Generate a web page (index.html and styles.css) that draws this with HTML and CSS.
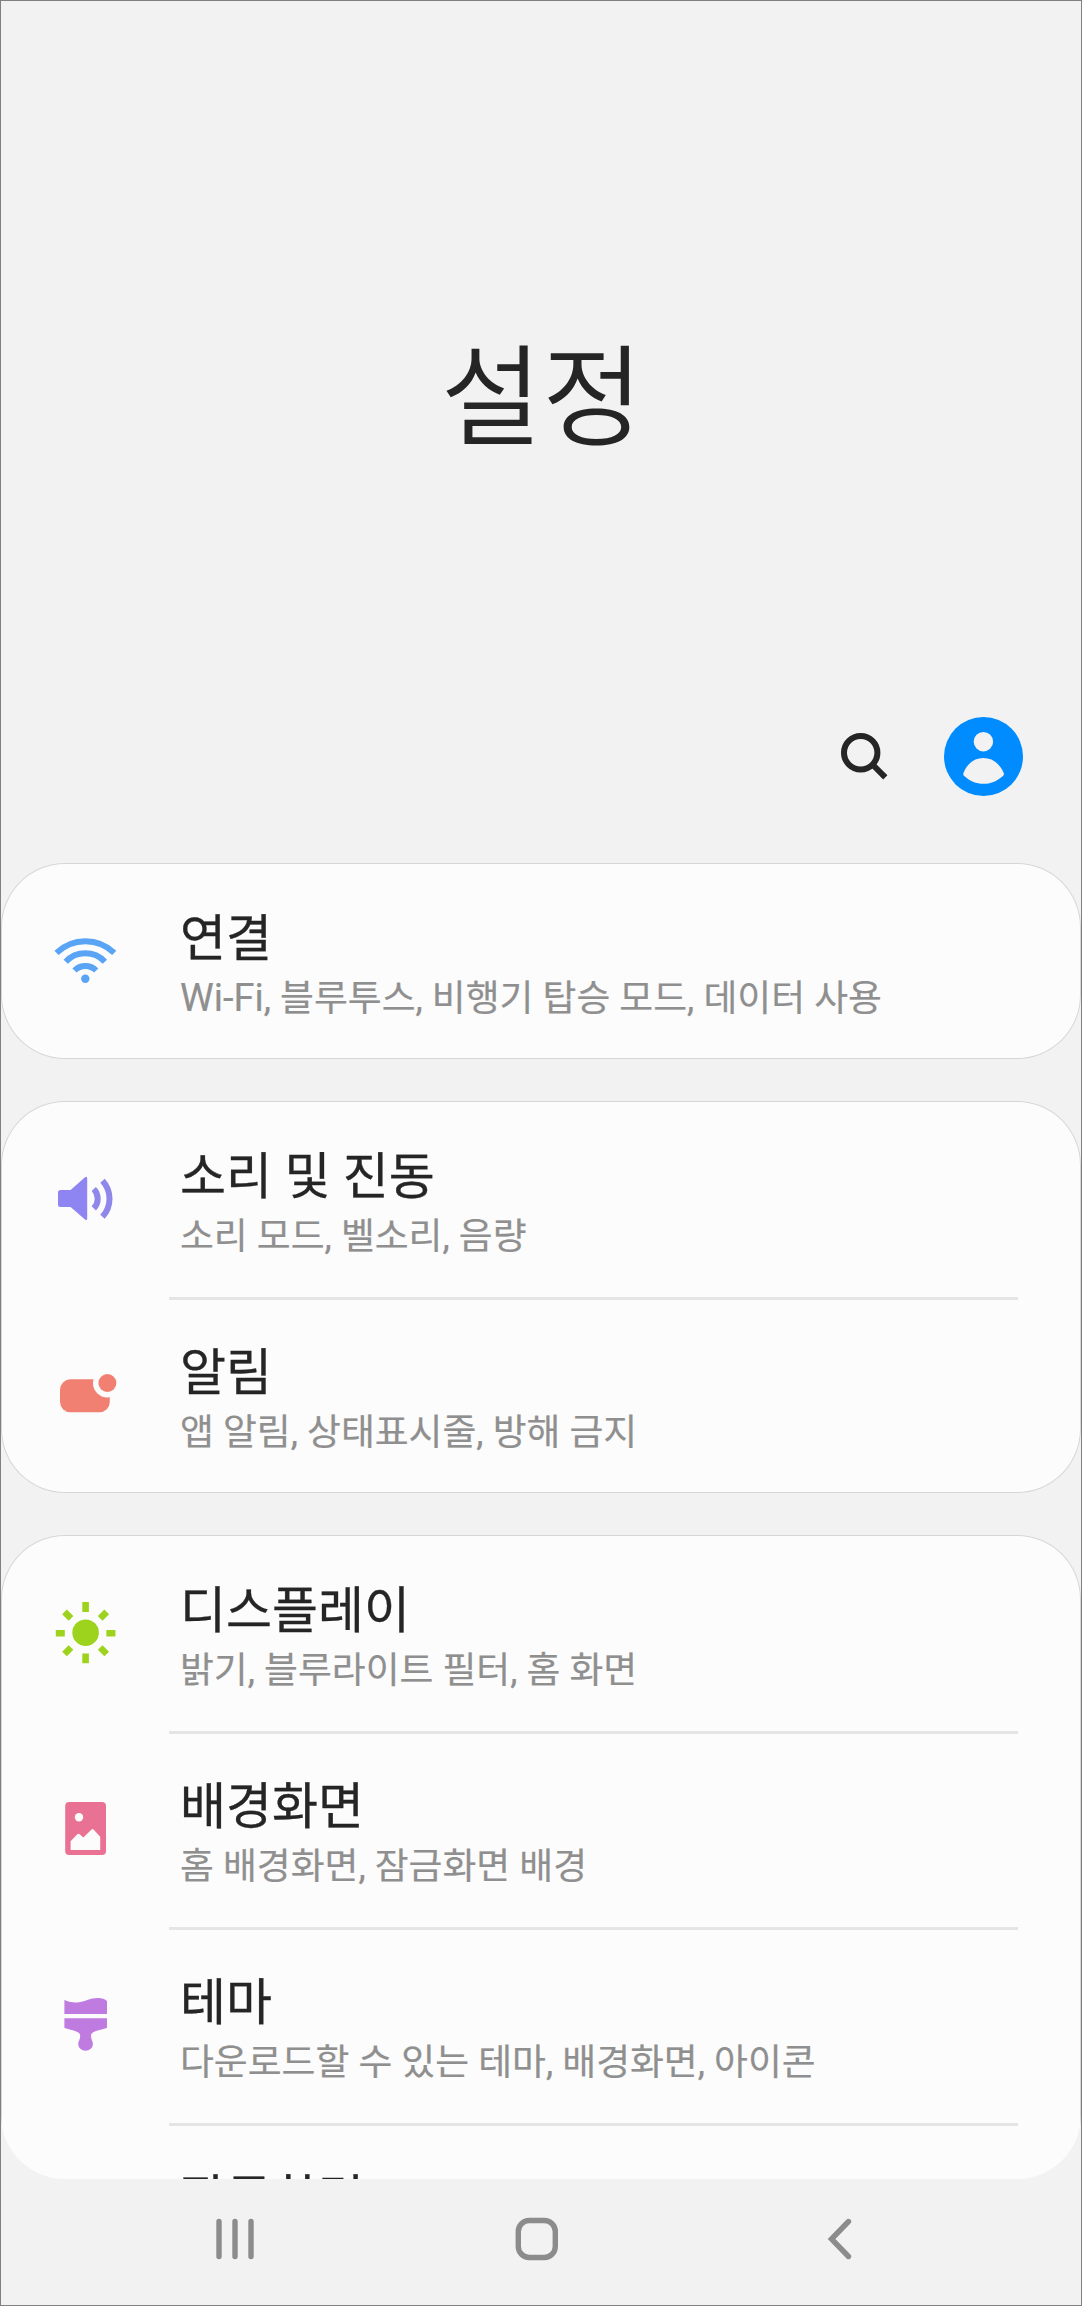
FILE: index.html
```html
<!DOCTYPE html>
<html lang="ko">
<head>
<meta charset="utf-8">
<title>설정</title>
<link rel="stylesheet" href="styles.css">
</head>
<body>
<div class="screen">
  <main class="viewport">
    <header class="header">
      <h1 class="page-title">설정</h1>
      <div class="actions">
        <svg class="search" viewBox="0 0 48 48"><circle cx="20.7" cy="20.7" r="16.7"/><path d="M32.5 32.5 45.3 45.3"/></svg>
        <svg class="avatar" viewBox="0 0 80 80"><circle cx="40.5" cy="40.5" r="39.5" fill="#008bff"/><circle cx="40.4" cy="25.7" r="9.7" fill="#f2f2f2"/><path d="M20.600 56.700C23.900 48 30.900 42 40.400 42S56.900 48 60.600 56.700C61.400 58.400 60.800 59.200 59.600 60.200C53.900 65.300 47.400 67.800 40.400 67.800S26.900 65.300 21.300 60C20.100 58.900 20 58.300 20.600 56.700Z" fill="#f2f2f2"/></svg>
      </div>
    </header>

    <section class="card">
      <div class="row">
        <svg class="icon wifi" viewBox="0 0 72 72"><path d="M6.500 27.800A41.500 41.500 0 0 1 64.200 27.800M15.700 36.700A27 27 0 0 1 54.900 36.700M24.500 45.500A15.200 15.200 0 0 1 46.200 45.500"/><circle cx="35.300" cy="53.800" r="4.200"/></svg>
        <div class="text"><h2 class="title">연결</h2><p class="summary"><span class="latin">Wi-Fi</span>, 블루투스, 비행기 탑승 모드, 데이터 사용</p></div>
      </div>
    </section>

    <section class="card">
      <div class="row">
        <svg class="icon sound" viewBox="0 0 72 72"><path class="body" d="M10.500 27H20.600L35 14.200Q37.200 12.800 37.200 15.200V55.500Q37.200 58 35 56.500L20.600 44H10.500Q8 44 8 41.500V29.500Q8 27 10.500 27Z"/><path class="wave" d="M43.800 26A13.800 13.800 0 0 1 43.800 45.300M52.500 17.700A26.600 26.600 0 0 1 52.500 53.700"/></svg>
        <div class="text"><h2 class="title">소리 및 진동</h2><p class="summary">소리 모드, 벨소리, 음량</p></div>
      </div>
      <div class="row">
        <svg class="icon notice" viewBox="0 0 72 72"><rect x="10" y="20.300" width="49.800" height="33" rx="10.500"/><circle class="gap" cx="57.400" cy="24" r="14.400"/><circle cx="57.400" cy="24" r="9"/></svg>
        <div class="text"><h2 class="title">알림</h2><p class="summary">앱 알림, 상태표시줄, 방해 금지</p></div>
      </div>
    </section>

    <section class="card">
      <div class="row">
        <svg class="icon display" viewBox="0 0 72 72"><circle cx="35.600" cy="35.700" r="13.300"/><path d="M35.600 5V15M35.600 56.500V66.300M5.800 36.200H14.800M56.400 36.200H65.400M14.500 14.800 21 21.300M50.200 21.300 56.700 14.800M14.500 57 21 50.500M50.200 50.500 56.700 57"/></svg>
        <div class="text"><h2 class="title">디스플레이</h2><p class="summary">밝기, 블루라이트 필터, 홈 화면</p></div>
      </div>
      <div class="row">
        <svg class="icon wallpaper" viewBox="0 0 72 72"><rect x="15.200" y="9" width="40.800" height="53" rx="4"/><g class="cut"><circle cx="29" cy="24.300" r="4.200"/><path d="M20.600 57V48.200L27.300 41.200Q28.500 40.200 29.700 41.200L33.300 44.500 41.300 36.700Q42.600 35.500 43.800 36.700L50.200 43.800V57Z"/></g></svg>
        <div class="text"><h2 class="title">배경화면</h2><p class="summary">홈 배경화면, 잠금화면 배경</p></div>
      </div>
      <div class="row">
        <svg class="icon theme" viewBox="0 0 72 72"><path d="M14.400 11Q20 14.200 29 13.200C36 12.300 40 9 48 9Q54 9 57 12V25H14.400ZM14.400 29.300H57V38.700C52 41 41 41.500 41 46.700C41 50.500 42.900 52 42.900 55A7.300 6.700 0 0 1 28.200 55C28.200 52 30.200 50.500 30.200 46.700C30.200 41.500 19 41 14.400 38.700Z"/></svg>
        <div class="text"><h2 class="title">테마</h2><p class="summary">다운로드할 수 있는 테마, 배경화면, 아이콘</p></div>
      </div>
      <div class="row">
        <span class="icon"></span>
        <div class="text"><h2 class="title">잠금화면</h2></div>
      </div>
    </section>
  </main>

  <nav class="navbar">
    <svg class="nav-icon" viewBox="0 0 48 48"><path d="M8 6.500V41.500M24 6.500V41.500M40 6.500V41.500"/></svg>
    <svg class="nav-icon" viewBox="0 0 48 48"><rect x="5.300" y="5.500" width="37" height="37" rx="11"/></svg>
    <svg class="nav-icon" viewBox="0 0 48 48"><path d="M33.500 6.500 16.500 24 33.500 41.500"/></svg>
  </nav>
</div>
</body>
</html>
```
FILE: styles.css
```css
* {
  box-sizing: border-box;
}

body {
  margin: 0;
  background: #f2f2f2;
  font-family: Roboto, "Noto Sans CJK KR", sans-serif;
  color: #252525;
}

.screen {
  display: flex;
  flex-direction: column;
  width: 1082px;
  height: 2306px;
  border: 1px solid #808080;
  background: #f2f2f2;
}

.viewport {
  display: flex;
  flex-direction: column;
  gap: 42px;
  height: 2178px;
  overflow: hidden;
  border-radius: 0 0 64px 64px;
}

.header {
  display: flex;
  flex-direction: column;
  justify-content: space-between;
  flex: none;
  height: 820px;
  padding-top: 319px;
}

.page-title {
  margin: 0;
  padding-left: 2px;
  font-size: 110px;
  font-weight: 350;
  line-height: 160px;
  text-align: center;
}

.actions {
  display: flex;
  align-items: center;
  justify-content: flex-end;
  gap: 55px;
  padding: 0 58px 25px 0;
}

.search {
  width: 48px;
  height: 48px;
  fill: none;
  stroke: #252525;
  stroke-width: 6;
}

.avatar {
  width: 80px;
  height: 80px;
}

.card {
  flex: none;
  border-radius: 64px;
  background: #fcfcfc;
  box-shadow: inset 0 0 0 1px #d6d6d6;
}

.row {
  display: flex;
  align-items: center;
  height: 196px;
  padding: 0 63px 0 49px;
}

.icon {
  flex: none;
  width: 72px;
  height: 72px;
  margin-right: 47px;
}

.text {
  flex: 1;
  height: 196px;
  padding: 40px 0 0 11px;
  border-top: 3px solid transparent;
}

.row + .row .text {
  border-color: #e5e5e5;
}

.title {
  margin: 0;
  font-size: 50px;
  font-weight: 400;
  line-height: 66px;
  -webkit-text-stroke: 0.300px currentColor;
}

.summary {
  margin: 0;
  color: #8f8f8f;
  font-size: 36.800px;
  line-height: 54px;
  white-space: nowrap;
  -webkit-text-stroke: 0.200px currentColor;
}

.latin {
  font-size: 38px;
  line-height: 1;
}

.wifi {
  fill: #5aa4f6;
}

.wifi path {
  fill: none;
  stroke: #5aa4f6;
  stroke-width: 6;
}

.sound .body {
  fill: #8f85f2;
}

.sound .wave {
  fill: none;
  stroke: #8f88ea;
  stroke-width: 6;
}

.notice {
  fill: #f18072;
}

.notice .gap {
  fill: #fcfcfc;
}

.display {
  fill: #9dd31d;
  stroke: #9dd31d;
  stroke-width: 6.600;
}

.display circle {
  stroke: none;
}

.wallpaper {
  fill: #e87194;
}

.wallpaper .cut {
  fill: #fcfcfc;
}

.theme {
  fill: #bf7be0;
}

.navbar {
  display: flex;
  justify-content: center;
  gap: 254px;
  padding: 36px 8px 0 0;
}

.nav-icon {
  width: 48px;
  height: 48px;
  fill: none;
  stroke: #8c8c8c;
  stroke-width: 5.400;
  stroke-linecap: round;
}
```
